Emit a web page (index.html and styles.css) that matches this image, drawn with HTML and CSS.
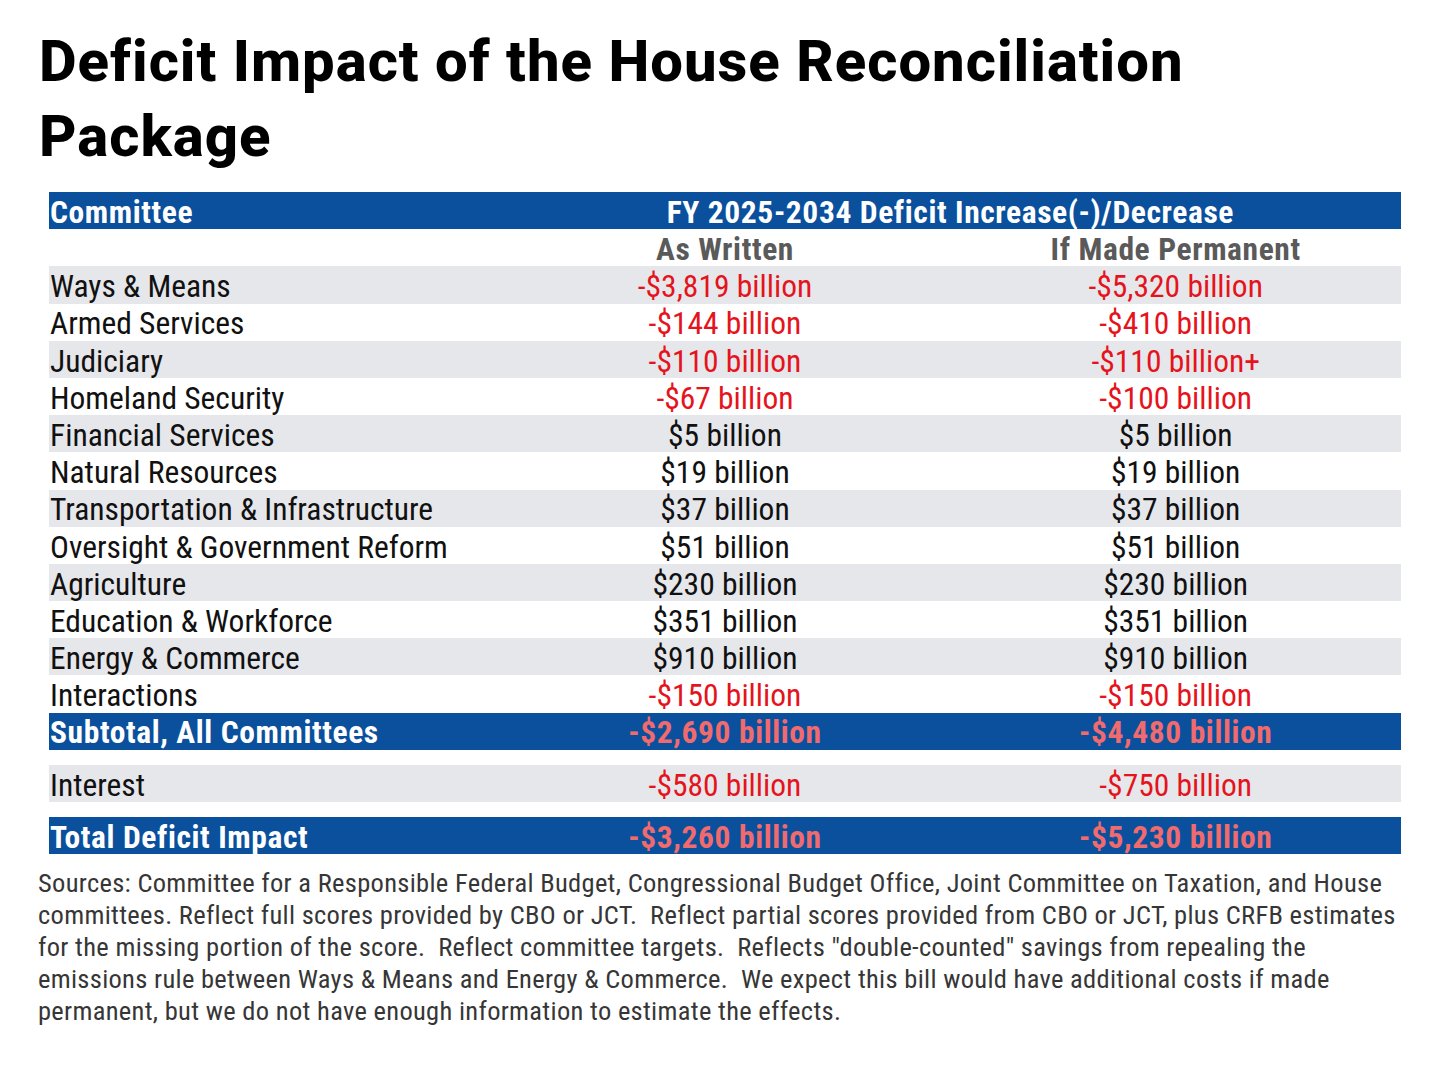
FILE: index.html
```html
<!DOCTYPE html>
<html lang="en">
<head>
<meta charset="utf-8">
<title>Deficit Impact of the House Reconciliation Package</title>
<link rel="stylesheet" href="styles.css">
</head>
<body>
<main class="page">
  <h1 class="title">Deficit Impact of the House Reconciliation<br>Package</h1>

  <section class="table">
    <div class="row head">
      <div class="cell name">Committee</div>
      <div class="cell span2">FY 2025-2034 Deficit Increase(-)/Decrease</div>
    </div>
    <div class="row sub">
      <div class="cell name"></div>
      <div class="cell">As Written</div>
      <div class="cell">If Made Permanent</div>
    </div>

    <div class="row alt"><div class="cell name">Ways &amp; Means</div><div class="cell neg">-$3,819 billion</div><div class="cell neg">-$5,320 billion</div></div>
    <div class="row"><div class="cell name">Armed Services</div><div class="cell neg">-$144 billion</div><div class="cell neg">-$410 billion</div></div>
    <div class="row alt"><div class="cell name">Judiciary</div><div class="cell neg">-$110 billion</div><div class="cell neg">-$110 billion+</div></div>
    <div class="row"><div class="cell name">Homeland Security</div><div class="cell neg">-$67 billion</div><div class="cell neg">-$100 billion</div></div>
    <div class="row alt"><div class="cell name">Financial Services</div><div class="cell">$5 billion</div><div class="cell">$5 billion</div></div>
    <div class="row"><div class="cell name">Natural Resources</div><div class="cell">$19 billion</div><div class="cell">$19 billion</div></div>
    <div class="row alt"><div class="cell name">Transportation &amp; Infrastructure</div><div class="cell">$37 billion</div><div class="cell">$37 billion</div></div>
    <div class="row"><div class="cell name">Oversight &amp; Government Reform</div><div class="cell">$51 billion</div><div class="cell">$51 billion</div></div>
    <div class="row alt"><div class="cell name">Agriculture</div><div class="cell">$230 billion</div><div class="cell">$230 billion</div></div>
    <div class="row"><div class="cell name">Education &amp; Workforce</div><div class="cell">$351 billion</div><div class="cell">$351 billion</div></div>
    <div class="row alt"><div class="cell name">Energy &amp; Commerce</div><div class="cell">$910 billion</div><div class="cell">$910 billion</div></div>
    <div class="row"><div class="cell name">Interactions</div><div class="cell neg">-$150 billion</div><div class="cell neg">-$150 billion</div></div>

    <div class="row total"><div class="cell name">Subtotal, All Committees</div><div class="cell">-$2,690 billion</div><div class="cell">-$4,480 billion</div></div>
    <div class="row alt gap"><div class="cell name">Interest</div><div class="cell neg">-$580 billion</div><div class="cell neg">-$750 billion</div></div>
    <div class="row total gap"><div class="cell name">Total Deficit Impact</div><div class="cell">-$3,260 billion</div><div class="cell">-$5,230 billion</div></div>
  </section>

  <p class="notes">Sources: Committee for a Responsible Federal Budget, Congressional Budget Office, Joint Committee on Taxation, and House<br>committees. Reflect full scores provided by CBO or JCT. &nbsp;Reflect partial scores provided from CBO or JCT, plus CRFB estimates<br>for the missing portion of the score. &nbsp;Reflect committee targets. &nbsp;Reflects "double-counted" savings from repealing the<br>emissions rule between Ways &amp; Means and Energy &amp; Commerce. &nbsp;We expect this bill would have additional costs if made<br>permanent, but we do not have enough information to estimate the effects.</p>
</main>
</body>
</html>
```

FILE: styles.css
```css
* { box-sizing: border-box; }

html, body {
  margin: 0;
  padding: 0;
  background: #ffffff;
}

body {
  font-family: "Roboto", "Open Sans", "Liberation Sans", sans-serif;
  font-stretch: 75%;
  color: #111111;
}

.page {
  width: 1440px;
  height: 1070px;
  padding: 24px 0 0 0;
}

.title {
  margin: 0 0 0 39px;
  font-size: 58px;
  line-height: 75px;
  font-weight: 800;
  font-stretch: 100%;
  letter-spacing: 1px;
  color: #000000;
}

.table {
  margin: 18px 0 0 49px;
  width: 1352px;
  display: flex;
  flex-direction: column;
}

.row {
  display: grid;
  grid-template-columns: repeat(3, 1fr);
  height: 37.2px;
  align-items: center;
  font-size: 31.5px;
  line-height: 1;
}

.cell {
  text-align: center;
  white-space: nowrap;
  padding-top: 4px;
}

.cell.name {
  text-align: left;
  padding-left: 1px;
}

.span2 {
  grid-column: 2 / span 2;
}

.alt {
  background: #e6e7eb;
}

.head {
  background: #0a509c;
  color: #ffffff;
  font-weight: 700;
  font-stretch: 87.5%;
  letter-spacing: 0.6px;
}

.sub {
  color: #5a5a5a;
  font-weight: 700;
  font-stretch: 87.5%;
  letter-spacing: 0.6px;
}

.neg {
  color: #e5141c;
}

.total {
  background: #0a509c;
  color: #f06a6e;
  font-weight: 700;
  font-stretch: 87.5%;
  letter-spacing: 0.6px;
}

.total .name {
  color: #ffffff;
}

.gap {
  margin-top: 15px;
}

.notes {
  margin: 13px 0 0 38px;
  font-size: 26.5px;
  line-height: 32px;
  font-stretch: 87.5%;
  letter-spacing: 0.3px;
  white-space: nowrap;
  color: #363636;
}
```
